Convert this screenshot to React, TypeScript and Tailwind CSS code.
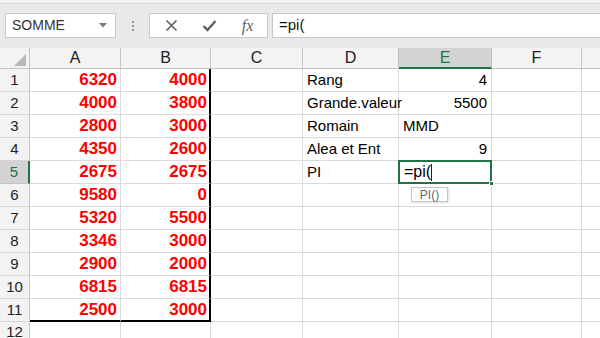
import React from "react"

const columns = [
    { key: "A", w: "w-[91px]" },
    { key: "B", w: "w-[90px]" },
    { key: "C", w: "w-[92px]" },
    { key: "D", w: "w-[96px]" },
    { key: "E", w: "w-[93px]" },
    { key: "F", w: "w-[90px]" },
]

const colA = [6320, 4000, 2800, 4350, 2675, 9580, 5320, 3346, 2900, 6815, 2500]
const colB = [4000, 3800, 3000, 2600, 2675, 0, 5500, 3000, 2000, 6815, 3000]
const colD = ["Rang", "Grande.valeur", "Romain", "Alea et Ent", "PI"]
const colE: (string | number)[] = [4, 5500, "MMD", 9]

function FormulaBar() {
    return (
        <div className="h-[48px] bg-[#e9e9e9] flex flex-col">
            <div className="h-[4px] bg-[#f4f4f4] border-b border-[#d6d6d6]" />
            <div className="flex flex-row items-start pt-[9px] pl-[5px]">
                <div className="w-[111px] h-[25px] bg-white border border-[#c8c8c8] flex flex-row items-center justify-between pl-[6px] pr-[8px]">
                    <span className="text-[14px] text-[#333]">SOMME</span>
                    <svg width="8" height="5" viewBox="0 0 8 5">
                        <path d="M0 0 L8 0 L4 4.5 Z" fill="#7a7a7a" />
                    </svg>
                </div>
                <div className="w-[33px] h-[25px] flex flex-col items-center justify-center gap-[2px]">
                    <span className="w-[2px] h-[2px] bg-[#9a9a9a]" />
                    <span className="w-[2px] h-[2px] bg-[#9a9a9a]" />
                    <span className="w-[2px] h-[2px] bg-[#9a9a9a]" />
                </div>
                <div className="w-[119px] h-[25px] bg-white border border-[#c8c8c8] flex flex-row items-center">
                    <div className="w-[40px] flex justify-center pl-[3px]">
                        <svg width="13" height="13" viewBox="0 0 13 13">
                            <path d="M1.5 1.5 L11.5 11.5 M11.5 1.5 L1.5 11.5" stroke="#5f5f5f" strokeWidth="1.6" />
                        </svg>
                    </div>
                    <div className="w-[38px] flex justify-center">
                        <svg width="15" height="13" viewBox="0 0 15 13">
                            <path d="M1.5 7 L5.5 11 L13.5 2" stroke="#5f5f5f" strokeWidth="2.4" fill="none" />
                        </svg>
                    </div>
                    <div className="w-[39px] flex justify-center">
                        <span className="font-['Liberation_Serif'] italic text-[16px] text-[#5f5f5f] leading-none">fx</span>
                    </div>
                </div>
                <div className="flex-1 ml-[4px] h-[25px] bg-white border-y border-l border-[#c8c8c8] flex items-center pl-[6px]">
                    <span className="text-[15px] text-[#111]">=pi(</span>
                </div>
            </div>
        </div>
    )
}

function HeaderRow() {
    return (
        <div className="flex flex-row h-[21px] bg-[#f3f3f3]">
            <div className="w-[30px] shrink-0 border-r border-b border-[#c4c4c4] relative">
                <svg className="absolute right-[3px] bottom-[2px]" width="12" height="12" viewBox="0 0 12 12">
                    <path d="M12 0 L12 12 L0 12 Z" fill="#b8b8b8" />
                </svg>
            </div>
            {columns.map((col) =>
                col.key === "E" ? (
                    <div key={col.key} className={`${col.w} shrink-0 bg-[#d3d3d3] border-r border-[#bdbdbd] border-b-2 border-b-[#217346] flex items-center justify-center text-[16px] text-[#217346]`}>
                        {col.key}
                    </div>
                ) : (
                    <div key={col.key} className={`${col.w} shrink-0 border-r border-b border-[#c4c4c4] flex items-center justify-center text-[16px] text-[#222]`}>
                        {col.key}
                    </div>
                )
            )}
            <div className="flex-1 border-b border-[#c4c4c4]" />
        </div>
    )
}

function Row({ n }: { n: number }) {
    const i = n - 1
    const active = n === 5
    const last = n === 11
    const a = colA[i]
    const b = colB[i]
    const d = colD[i]
    const e = colE[i]

    return (
        <div className="flex flex-row h-[23px] bg-white">
            <div
                className={
                    active
                        ? "w-[30px] shrink-0 bg-[#d3d3d3] border-b border-[#c4c4c4] border-r-2 border-r-[#217346] flex items-center justify-center text-[15px] text-[#217346]"
                        : "w-[30px] shrink-0 bg-[#f3f3f3] border-b border-[#d6d6d6] border-r border-r-[#c4c4c4] flex items-center justify-center text-[15px] text-[#222]"
                }
            >
                {n}
            </div>
            {/* A */}
            <div className={`w-[91px] shrink-0 border-r border-[#dadada] flex items-center justify-end pr-[3px] font-bold text-[17px] text-[#ff0000] ${last ? "border-b-2 border-b-black" : "border-b"}`}>
                {a}
            </div>
            {/* B */}
            <div className={`w-[90px] shrink-0 border-r-2 border-r-black border-[#dadada] flex items-center justify-end pr-[2px] font-bold text-[17px] text-[#ff0000] ${last ? "border-b-2 border-b-black" : "border-b"}`}>
                {b}
            </div>
            {/* C */}
            <div className="w-[92px] shrink-0 border-r border-b border-[#dadada]" />
            {/* D */}
            <div className="w-[96px] shrink-0 border-r border-b border-[#dadada] flex items-center pl-[4px] text-[15px] text-black">
                {d}
            </div>
            {/* E */}
            {active ? (
                <div className="w-[93px] shrink-0 border-r border-b border-[#dadada] relative">
                    <div className="absolute -left-[1px] -top-[1px] w-[94px] h-[24px] border-2 border-[#217346] flex items-center pl-[4px] text-[16px] text-black">
                        =pi(<span className="inline-block w-[1px] h-[17px] bg-[#222]" />
                    </div>
                    <div className="absolute right-[-3px] bottom-[-3px] w-[5px] h-[5px] bg-[#217346] border border-white" />
                    <div className="absolute left-[12px] top-[26px] w-[37px] h-[15px] bg-white border border-[#c6c6c6] shadow-[1px_1px_2px_rgba(0,0,0,0.15)] flex items-center justify-center text-[12px] text-[#666] z-10">
                        PI()
                    </div>
                </div>
            ) : (
                <div className={`w-[93px] shrink-0 border-r border-b border-[#dadada] flex items-center px-[4px] text-[15px] text-black ${typeof e === "number" ? "justify-end" : "justify-start"}`}>
                    {e}
                </div>
            )}
            {/* F */}
            <div className="w-[90px] shrink-0 border-r border-b border-[#dadada]" />
            <div className="flex-1 border-b border-[#dadada]" />
        </div>
    )
}

export default function App() {
    const rows = Array.from({ length: 12 }, (_, i) => i + 1)

    return (
        <div className="w-[600px] h-[338px] overflow-hidden bg-white font-['Liberation_Sans',Arial,sans-serif]">
            <FormulaBar />
            <HeaderRow />
            {rows.map((n) =>
                n === 12 ? (
                    <div key={n} className="flex flex-row h-[23px] bg-white">
                        <div className="w-[30px] shrink-0 bg-[#f3f3f3] border-r border-[#c4c4c4] flex items-start pt-[1px] justify-center text-[15px] leading-[18px] text-[#222]">12</div>
                        <div className="w-[91px] shrink-0 border-r border-[#dadada]" />
                        <div className="w-[90px] shrink-0 border-r border-[#dadada]" />
                        <div className="w-[92px] shrink-0 border-r border-[#dadada]" />
                        <div className="w-[96px] shrink-0 border-r border-[#dadada]" />
                        <div className="w-[93px] shrink-0 border-r border-[#dadada]" />
                        <div className="w-[90px] shrink-0 border-r border-[#dadada]" />
                        <div className="flex-1" />
                    </div>
                ) : (
                    <Row key={n} n={n} />
                )
            )}
        </div>
    )
}
